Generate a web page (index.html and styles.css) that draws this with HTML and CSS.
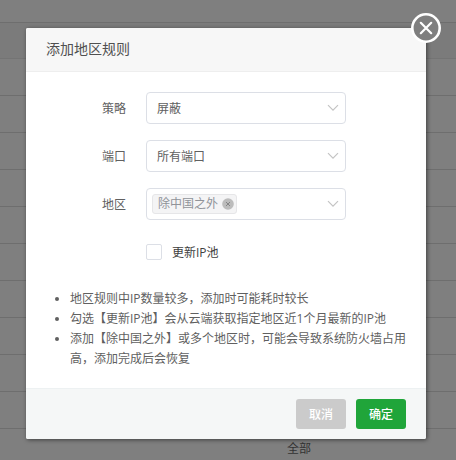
FILE: index.html
```
<!DOCTYPE html>
<html lang="zh-CN">
<head>
    <meta charset="UTF-8">
    <meta name="viewport" content="width=device-width, initial-scale=1.0">
    <title>添加地区规则</title>
    <link rel="stylesheet" href="styles.css">
</head>
<body>
    <div class="table">
        <div class="row row-top"></div>
        <div class="row row-head"></div>
        <div class="row"></div>
        <div class="row"></div>
        <div class="row"></div>
        <div class="row"></div>
        <div class="row"></div>
        <div class="row"></div>
        <div class="row"></div>
        <div class="row"></div>
        <div class="row"></div>
        <div class="row"></div>
        <div class="row row-last">全部</div>
    </div>

    <div class="modal">
        <button class="close" aria-label="关闭">
            <svg width="30" height="30" viewBox="0 0 30 30">
                <circle cx="15" cy="15" r="13.7" fill="#7f7f7f" stroke="#fff" stroke-width="2.6"/>
                <path d="M9.8 9.8L20.2 20.2M20.2 9.8L9.8 20.2" stroke="#fff" stroke-width="2.2" stroke-linecap="round"/>
            </svg>
        </button>
        <div class="modal-title">添加地区规则</div>
        <div class="modal-body">
            <div class="line">
                <span class="label">策略</span>
                <div class="select">
                    <span>屏蔽</span>
                    <svg class="arrow" width="12" height="8" viewBox="0 0 12 8"><path d="M1 1.2L6 6.2L11 1.2"/></svg>
                </div>
            </div>
            <div class="line">
                <span class="label">端口</span>
                <div class="select">
                    <span>所有端口</span>
                    <svg class="arrow" width="12" height="8" viewBox="0 0 12 8"><path d="M1 1.2L6 6.2L11 1.2"/></svg>
                </div>
            </div>
            <div class="line">
                <span class="label">地区</span>
                <div class="select select-multi">
                    <span class="tag">除中国之外
                        <svg width="12" height="12" viewBox="0 0 12 12">
                            <circle cx="6" cy="6" r="5.8" fill="#bcbcbc"/>
                            <path d="M4 4L8 8M8 4L4 8" stroke="#858585" stroke-width="1"/>
                        </svg>
                    </span>
                    <svg class="arrow" width="12" height="8" viewBox="0 0 12 8"><path d="M1 1.2L6 6.2L11 1.2"/></svg>
                </div>
            </div>
            <div class="line">
                <span class="label"></span>
                <label class="check"><span class="box"></span><span>更新IP池</span></label>
            </div>
            <ul class="help">
                <li>地区规则中IP数量较多，添加时可能耗时较长</li>
                <li>勾选【更新IP池】会从云端获取指定地区近1个月最新的IP池</li>
                <li>添加【除中国之外】或多个地区时，可能会导致系统防火墙占用高，添加完成后会恢复</li>
            </ul>
        </div>
        <div class="modal-footer">
            <button class="btn btn-cancel">取消</button>
            <button class="btn btn-ok">确定</button>
        </div>
    </div>
</body>
</html>
```
FILE: styles.css
```
* {
    box-sizing: border-box;
}
body {
    margin: 0;
    height: 460px;
    overflow: hidden;
    position: relative;
    font-family: "Open Sans", "Noto Sans CJK SC", sans-serif;
    font-size: 12px;
    line-height: 20px;
    color: #606060;
    background: #7f7f7f;
}
.row {
    height: 37px;
    border-bottom: 1px solid #6e6e6e;
}
.row-top {
    height: 23px;
}
.row-head {
    height: 36px;
    background: #7b7b7b;
    border-color: #747474;
}
.row-last {
    border: none;
    padding: 10px 0 0 287px;
    color: #333;
}
/* 弹窗 */
.modal {
    position: absolute;
    top: 28px;
    left: 26px;
    width: 400px;
    height: 411px;
    display: flex;
    flex-direction: column;
    background: #fff;
    border-radius: 2px;
    box-shadow: 1px 1px 4px rgba(0, 0, 0, .5);
}
.close {
    position: absolute;
    top: -15px;
    right: -15px;
    width: 30px;
    height: 30px;
    padding: 0;
    border: none;
    background: none;
    cursor: pointer;
}
.close svg {
    display: block;
}
.modal-title {
    height: 44px;
    padding-left: 20px;
    line-height: 42px;
    font-size: 14px;
    color: #505050;
    background: #f7f7f7;
    border-bottom: 1px solid #eee;
    border-radius: 2px 2px 0 0;
}
.modal-body {
    flex: 1;
    padding-top: 20px;
}
.line {
    display: flex;
    align-items: center;
    height: 32px;
    margin-bottom: 16px;
}
.label {
    width: 100px;
    margin-right: 20px;
    padding-top: 2px;
    text-align: right;
}
.select {
    display: flex;
    align-items: center;
    justify-content: space-between;
    width: 200px;
    height: 32px;
    padding: 0 6px 0 10px;
    border: 1px solid #dcdfe6;
    border-radius: 4px;
}
.select > span:not(.tag),
.check span:last-child {
    padding-top: 2px;
}
.select-multi {
    padding-left: 5px;
}
.arrow {
    fill: none;
    stroke: #c4c4c4;
    stroke-width: 1.2;
}
.tag {
    display: flex;
    align-items: center;
    gap: 4px;
    height: 20px;
    padding: 0 2px 0 5px;
    color: #909399;
    background: #f4f4f5;
    border: 1px solid #e6e6e8;
    border-radius: 3px;
}
.check {
    display: flex;
    align-items: center;
    gap: 10px;
    color: #404040;
}
.box {
    width: 16px;
    height: 16px;
    border: 1px solid #dcdfe6;
    border-radius: 2px;
}
.help {
    margin: 21px 0 0;
    padding: 0 18px 0 44px;
}
.modal-footer {
    display: flex;
    justify-content: flex-end;
    gap: 10px;
    height: 51px;
    padding: 10px 20px;
    background: #f5f7f7;
    border-top: 1px solid #edf1f2;
    border-radius: 0 0 2px 2px;
}
.btn {
    width: 50px;
    height: 30px;
    padding: 2px 0 0;
    border: none;
    border-radius: 3px;
    font: inherit;
    font-weight: 500;
    color: #fff;
    cursor: pointer;
}
.btn-cancel {
    background: #cbcbcb;
}
.btn-ok {
    background: #20a53a;
}
```
